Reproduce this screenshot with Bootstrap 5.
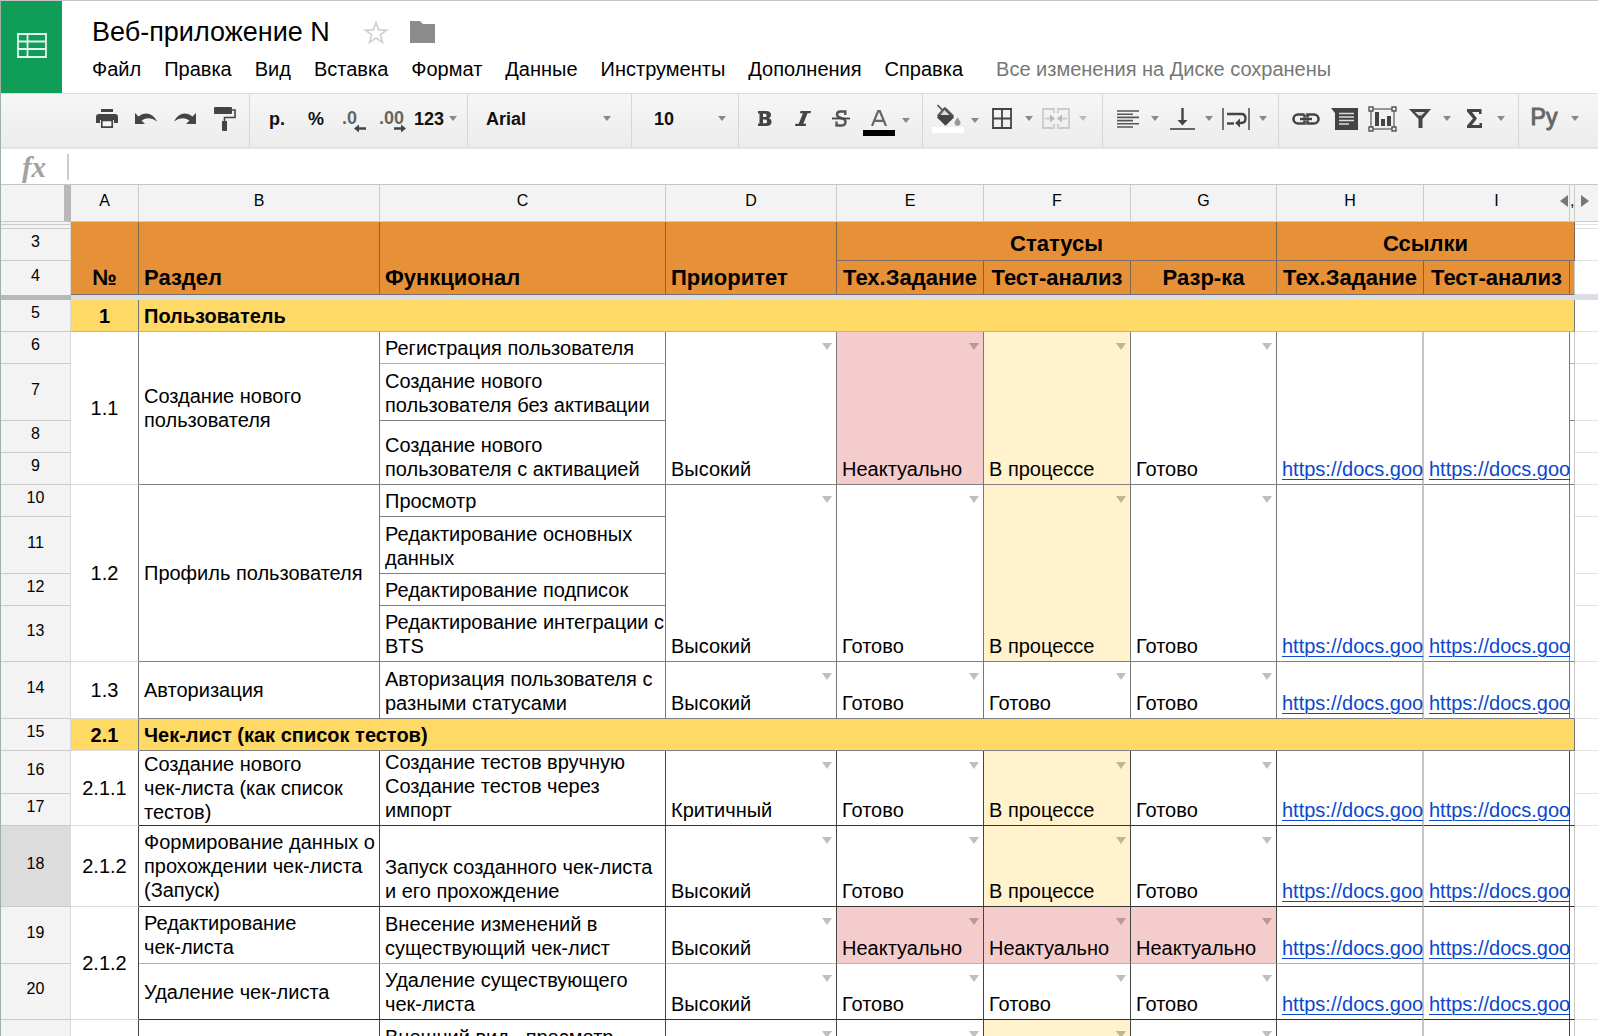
<!DOCTYPE html>
<html lang="ru">
<head>
<meta charset="utf-8">
<meta name="viewport" content="width=device-width, initial-scale=1">
<title>Веб-приложение N</title>
<link rel="stylesheet" href="https://cdn.jsdelivr.net/npm/bootstrap@5.3.0/dist/css/bootstrap.min.css">
<style>
body{font-family:"Liberation Sans",Arial,sans-serif;font-size:20px;line-height:24px;color:#000;background:#fff;border-top:1px solid #c4c4c4;border-left:1px solid #9fb0a4}
.brand{width:61px;padding-bottom:3px;background:#0f9d58}
.head-main{padding:15px 0 12px 30px}
.doc-title{font-size:27px;line-height:32px;font-weight:400}
.title-row{gap:21px}
.menu-row{gap:23px;padding-top:9px}
.menu-link{color:#000;text-decoration:none}
.saved{color:#777;margin-left:10px}
/* toolbar */
.tools{height:56px;background:linear-gradient(#f6f6f6,#ececec);border-top:1px solid #dcdcdc;border-bottom:2px solid #e4e4e4}
.tgroup{display:flex;align-items:center;flex-shrink:0;padding-left:6px;padding-bottom:4px;border-right:1px solid #d6d6d6}
.tbtn{width:38px;height:40px;padding:0;border:0;background:none;display:flex;align-items:center;justify-content:center;color:#444;flex-shrink:0}
.tcar{width:16px;height:40px;padding:0;border:0;background:none;display:flex;align-items:center;justify-content:center;color:#888;flex-shrink:0}
.ttext{font-size:18px;font-weight:700;color:#111}
.tlang{font-size:23px;color:#666;-webkit-text-stroke:1px #666;padding-bottom:4px}
.tsel{appearance:none;border:0;background:none;padding:0;outline:0;color:#111;font-size:18px;font-weight:700;min-width:0}
.g-file{width:249px;padding-left:87px;gap:1px}.g-num{width:218px;padding-left:8px;gap:1px}.g-font{width:164px;padding-left:18px}
.g-size{width:107px;padding-left:22px}.g-text{width:184px;padding-left:7px}.g-cell{width:180px}.g-align{width:176px}.g-ins{width:240px;padding-left:8px}
.swatch{width:32px;height:6px}
/* formula bar */
.fbar{height:36px;border-bottom:1px solid #c6c6c6}
.fx{width:66px;font:italic 700 29px/30px "Liberation Serif",serif;color:#a2a2a2;text-align:center}
.finput{border:0;border-left:2px solid #ccc;height:26px;outline:0;border-radius:0}
/* sheet */
.sheet{table-layout:fixed;width:100%;border-collapse:separate;border-spacing:0;--v:#777;--h:#808080;--g:#e2e2e2}
.sheet th,.sheet td{padding:0 2px 3px 5px;vertical-align:bottom;border-right:1px solid var(--v);border-bottom:1px solid var(--h);position:relative;font-weight:400}
.sheet .hd,.sheet .rn{background:#f3f3f3;font-size:16px;line-height:18px;text-align:center;vertical-align:middle;padding:0 0 5px;border-color:#cbcbcb}
.sheet .rn{border-right-color:#d9d9d9}
.sheet .corner{border-right:7px solid #b8b8b8}
.sheet .on{background:#dcdcdc}
.sheet .thin{font-size:1px;line-height:1px;padding:0}
.sheet .og{background:#e69138;font-weight:700;font-size:22px;padding-bottom:4px;border-right-color:#7d6650;border-bottom-color:#7d7068}
.sheet .ctr{text-align:center;padding-left:0;padding-right:0}
.sheet .sec{background:#ffd966;font-weight:700}
.sheet .lft{vertical-align:middle;padding-bottom:0}
.sheet .num{text-align:center;vertical-align:middle;padding:0;border-bottom-color:#dcdcdc}
.sheet .sl{padding:0;border-right-color:#c8c8c8}
.sheet .pl{padding:0;border-right:0;border-bottom-color:var(--g)}
.sheet .hc{border-right:2px solid #c6c6c6}
.sheet .hc,.sheet .ic{padding-right:0}
.sheet .soft{border-bottom-color:#b4b4b4}
.sheet .frz td{padding:0;background:#d9dde6;border:0;font-size:1px;line-height:1px}
.sheet .frz td:first-child{background:#b8b8b8}
.sheet .bad{background:#f4cccc}.sheet .wip{background:#fff2cc}
.dark{--v:#444;--h:#333}
.pick{position:absolute;top:11px;right:4px;width:10px;height:7px;padding:0;border:0;background:rgba(0,0,0,.25);clip-path:polygon(0 0,100% 0,50% 100%)}
.lnk{display:block;white-space:nowrap;color:#0b48cb;text-decoration:underline;text-decoration-thickness:1px;text-underline-offset:3px}
.spill{height:68px;display:flex;flex-direction:column;justify-content:flex-end}
.arr{position:absolute;top:10px;width:8px;height:12px;padding:0;border:0;background:#777}
.arr-l{right:1px;clip-path:polygon(100% 0,100% 100%,0 50%)}
.arr-r{left:6px;clip-path:polygon(0 0,100% 50%,0 100%)}
.r32{height:32px}.r34{height:34px}.r56{height:56px}.r57{height:57px}.r43{height:43px}.r81{height:81px}
</style>
<script src="https://cdn.jsdelivr.net/npm/bootstrap@5.3.0/dist/js/bootstrap.bundle.min.js"></script>
</head>
<body class="vh-100 d-flex flex-column overflow-hidden">
<svg width="0" height="0" class="position-absolute" aria-hidden="true"><symbol id="car" viewBox="0 0 8 5"><path d="M0 0h8L4 5z" fill="currentColor"/></symbol></svg>

<header class="d-flex flex-shrink-0">
  <a href="#" class="brand d-flex align-items-center justify-content-center" aria-label="Таблицы">
    <svg width="30" height="25" viewBox="0 0 30 25" fill="none" stroke="#e4f5ec" stroke-width="1.8"><path d="M1 1h28v23H1zM1 8.500h28M1 16h28M10.500 1v23"/></svg>
  </a>
  <div class="head-main flex-fill">
    <div class="title-row d-flex align-items-center">
      <h1 class="doc-title m-0">Веб-приложение N</h1>
      <button class="btn p-0 border-0 ms-2 d-flex" aria-label="Пометить"><svg class="ms-1" width="26" height="25" viewBox="0 0 26 25"><path d="M13 2.500l2.700 7.300 7.800.3-6.100 4.800 2.100 7.500-6.500-4.300-6.500 4.300 2.100-7.500-6.100-4.800 7.800-.3z" fill="none" stroke="#d2d2d2" stroke-width="1.800"/></svg></button>
      <button class="btn p-0 border-0 d-flex" aria-label="Переместить"><svg width="25" height="22" viewBox="0 0 25 22"><path d="M0 0h10l3 3h12v19H0z" fill="#8c8c8c"/></svg></button>
    </div>
    <nav class="menu-row d-flex align-items-center text-nowrap">
      <a href="#" class="menu-link">Файл</a><a href="#" class="menu-link">Правка</a><a href="#" class="menu-link">Вид</a><a href="#" class="menu-link">Вставка</a><a href="#" class="menu-link">Формат</a><a href="#" class="menu-link">Данные</a><a href="#" class="menu-link">Инструменты</a><a href="#" class="menu-link">Дополнения</a><a href="#" class="menu-link">Справка</a><span class="saved">Все изменения на Диске сохранены</span>
    </nav>
  </div>
</header>

<div class="tools d-flex flex-shrink-0 overflow-hidden" role="toolbar">
  <div class="tgroup g-file">
    <button class="tbtn" aria-label="Печать"><svg width="22" height="20" viewBox="0 0 22 20"><path d="M5 0h12v3H5zM3 5h16a3 3 0 0 1 3 3v6h-4v-3H4v3H0V8a3 3 0 0 1 3-3z" fill="#444"/><path d="M5.800 11.500h10.400v6.700H5.800z" fill="#f6f6f6" stroke="#444" stroke-width="1.700"/></svg></button>
    <button class="tbtn" aria-label="Отменить"><svg width="24" height="14" viewBox="0 0 24 14"><path d="M1 1v11h10L7.500 8.500Q15 3.500 23 9.500 19 1.500 12 1.500 8 1.500 4.500 4.500z" fill="#444"/></svg></button>
    <button class="tbtn" aria-label="Повторить"><svg width="24" height="14" viewBox="0 0 24 14"><path d="M23 1v11H13l3.500-3.500Q9 3.500 1 9.500 5 1.500 12 1.500q4 0 7.500 3z" fill="#444"/></svg></button>
    <button class="tbtn" aria-label="Копировать форматирование"><svg width="23" height="26" viewBox="0 0 23 26"><path d="M1 2q0-1 1-1h16q1 0 1 1v5q0 1-1 1H2q-1 0-1-1zM9 15h5v9q0 1-1 1h-3q-1 0-1-1z" fill="#444"/><path d="M19 4h3v7.500H11.500V16" fill="none" stroke="#444" stroke-width="1.600"/></svg></button>
  </div>
  <div class="tgroup g-num">
    <button class="tbtn ttext">р.</button><button class="tbtn ttext">%</button>
    <button class="tbtn" aria-label="Уменьшить число знаков"><svg width="26" height="26" viewBox="0 0 26 26"><text x="0" y="18" font-size="18" font-weight="700" fill="#666">.0</text><path d="M24 22.500H14" stroke="#444" stroke-width="2.500"/><path d="M17 18.500v8l-5-4z" fill="#444"/></svg></button>
    <button class="tbtn" aria-label="Увеличить число знаков"><svg width="30" height="26" viewBox="0 0 30 26"><text x="0" y="18" font-size="18" font-weight="700" fill="#666">.00</text><path d="M15 22.500h9" stroke="#444" stroke-width="2.500"/><path d="M22 18.500v8l5-4z" fill="#444"/></svg></button>
    <button class="tbtn ttext w-auto" aria-label="Другие форматы">123</button><button class="tcar" aria-label="Форматы"><svg width="8" height="5"><use href="#car"/></svg></button>
  </div>
  <div class="tgroup g-font"><select class="tsel flex-fill" aria-label="Шрифт"><option>Arial</option></select><span class="tcar me-3"><svg width="8" height="5"><use href="#car"/></svg></span></div>
  <div class="tgroup g-size"><select class="tsel flex-fill" aria-label="Размер шрифта"><option>10</option></select><span class="tcar me-2"><svg width="8" height="5"><use href="#car"/></svg></span></div>
  <div class="tgroup g-text">
    <button class="tbtn" aria-label="Полужирный"><svg width="14" height="15" viewBox="0 0 14 15"><path d="M0 0h8q5 0 5 4 0 2.400-2.300 3.200Q13.500 8 13.500 10.700 13.500 15 8 15H0v-2.500h1.500v-10H0zM5 2.700v3.400h2q1.700 0 1.700-1.700T7 2.700zM5 8.600v3.700h2.200q1.900 0 1.900-1.900T7.200 8.600z" fill="#444" fill-rule="evenodd"/></svg></button>
    <button class="tbtn" aria-label="Курсив"><svg width="16" height="15" viewBox="0 0 16 15"><path d="M5.500 0H16l-.5 2.300h-3L8.300 12.700h2.900l-.5 2.300H0l.5-2.300h3.200L7.900 2.300H5z" fill="#444"/></svg></button>
    <button class="tbtn" aria-label="Зачёркнутый"><svg width="18" height="17" viewBox="0 0 18 17"><path d="M13.300 5V1.500H8.500Q5 1.500 5 4.500 5 7 9 8q4.500 1 4.500 4 0 3.500-4.500 3.500H4.500V11.500" fill="none" stroke="#555" stroke-width="2.400"/><path d="M0 8.500h18" stroke="#444" stroke-width="1.800"/></svg></button>
    <button class="tbtn flex-column" aria-label="Цвет текста"><svg class="mt-2 mb-1" width="16" height="16" viewBox="0 0 16 16"><path d="M1 16L7.200 1h1.600L15 16M3.500 10.800h9" fill="none" stroke="#666" stroke-width="2.200"/></svg><span class="swatch bg-black"></span></button>
    <button class="tcar pt-1" aria-label="Цвета"><svg width="8" height="5"><use href="#car"/></svg></button>
  </div>
  <div class="tgroup g-cell">
    <button class="tbtn flex-column" aria-label="Цвет заливки"><svg width="26" height="23" viewBox="0 0 26 23"><path d="M10 4.500l9 9-8.500 8.300L2 13.500z" fill="#444"/><path d="M2.500 1l9 9.500M10 3.500L2.500 12M10 4l8.500 8.500" fill="none" stroke="#555" stroke-width="1.800"/><path d="M9.500 6l5 5h-9z" fill="#ddd"/><path d="M22.500 13.500q3 3.800 3 5.300a3 3 0 0 1-6 0q0-1.500 3-5.300z" fill="#999"/></svg><span class="swatch bg-white"></span></button>
    <button class="tcar pt-1" aria-label="Заливка"><svg width="8" height="5"><use href="#car"/></svg></button>
    <button class="tbtn" aria-label="Границы"><svg width="20" height="21" viewBox="0 0 20 21"><path d="M1 1h18v19H1zM10 1v19M1 10.500h18" fill="none" stroke="#444" stroke-width="1.800"/></svg></button>
    <button class="tcar" aria-label="Виды границ"><svg width="8" height="5"><use href="#car"/></svg></button>
    <button class="tbtn" aria-label="Объединить ячейки"><svg width="28" height="21" viewBox="0 0 28 21"><path d="M12 5V1H1v19h11v-4M16 5V1h11v19H16v-4M3 10.500h8M25 10.500h-8" fill="none" stroke="#ccc" stroke-width="1.800"/><path d="M8 6.500l5 4-5 4zM20 6.500l-5 4 5 4z" fill="#bbb"/></svg></button>
    <button class="tcar opacity-50" aria-label="Виды объединения"><svg width="8" height="5"><use href="#car"/></svg></button>
  </div>
  <div class="tgroup g-align">
    <button class="tbtn" aria-label="Выравнивание"><svg width="22" height="18" viewBox="0 0 22 18"><path d="M0 1h22M0 4.200h16M0 7.400h22M0 10.600h16M0 13.800h22M0 17h16" stroke="#555" stroke-width="1.600"/></svg></button>
    <button class="tcar" aria-label="По горизонтали"><svg width="8" height="5"><use href="#car"/></svg></button>
    <button class="tbtn" aria-label="Вертикальное выравнивание"><svg width="25" height="22" viewBox="0 0 25 22"><path d="M12.500 0v13" stroke="#444" stroke-width="2.400"/><path d="M7.500 12h10l-5 5.500z" fill="#444"/><path d="M0 21h25" stroke="#555" stroke-width="1.800"/></svg></button>
    <button class="tcar" aria-label="По вертикали"><svg width="8" height="5"><use href="#car"/></svg></button>
    <button class="tbtn" aria-label="Перенос текста"><svg width="28" height="22" viewBox="0 0 28 22"><path d="M1 0v22M27 0v22" stroke="#555" stroke-width="1.600"/><path d="M5 6h14.500q4 0 4 4.500T19 15h-2" fill="none" stroke="#444" stroke-width="2.400"/><path d="M5 15.500h7" stroke="#444" stroke-width="2.400"/><path d="M18 10.500v9l-5-4.500z" fill="#444"/></svg></button>
    <button class="tcar" aria-label="Виды переноса"><svg width="8" height="5"><use href="#car"/></svg></button>
  </div>
  <div class="tgroup g-ins">
    <button class="tbtn" aria-label="Ссылка"><svg width="28" height="12" viewBox="0 0 28 12"><path d="M12.500 1.500H6a4.500 4.500 0 0 0 0 9h6.500V7.500M15.500 4.500v-3H22a4.500 4.500 0 0 1 0 9h-6.500V7.500M12.500 4.500v-3M8 6h12" fill="none" stroke="#444" stroke-width="2.600"/></svg></button>
    <button class="tbtn" aria-label="Комментарий"><svg width="27" height="22" viewBox="0 0 27 22"><path d="M0 0h27v22H4V5z" fill="#444"/><path d="M8 5.500h15M8 9h15M8 12.500h15M8 16h10" stroke="#ddd" stroke-width="1.500"/></svg></button>
    <button class="tbtn" aria-label="Диаграмма"><svg width="29" height="26" viewBox="0 0 29 26"><path d="M3 3h23v20H3z" fill="none" stroke="#777" stroke-width="1.500"/><path d="M1 1h4v4H1zM24 1h4v4h-4zM1 21h4v4H1zM24 21h4v4h-4z" fill="#eee" stroke="#555" stroke-width="1.400"/><path d="M7 6h4v14H7zM13 13h4v7h-4zM19 10h4v10h-4z" fill="#444"/></svg></button>
    <button class="tbtn" aria-label="Фильтр"><svg width="22" height="19" viewBox="0 0 22 19"><path d="M0 0h22l-8.500 10v9h-4v-9z" fill="#444"/><path d="M6 3h10l-3.500 3.500h-3z" fill="#ddd"/></svg></button>
    <button class="tcar" aria-label="Фильтры"><svg width="8" height="5"><use href="#car"/></svg></button>
    <button class="tbtn" aria-label="Функции"><svg width="15" height="19" viewBox="0 0 15 19"><path d="M0 0h14.500v5H12V3H5l5 6.500L5 16h7.500v-2H15v5H0v-2.500l6-7-6-7z" fill="#444"/></svg></button>
    <button class="tcar" aria-label="Список функций"><svg width="8" height="5"><use href="#car"/></svg></button>
  </div>
  <div class="tgroup border-0">
    <button class="tbtn tlang" aria-label="Способ ввода">Ру</button>
    <button class="tcar ms-1" aria-label="Языки"><svg width="8" height="5"><use href="#car"/></svg></button>
  </div>
</div>

<div class="fbar d-flex align-items-center flex-shrink-0">
  <label class="fx" for="formula">fx</label>
  <input id="formula" class="finput flex-fill" type="text">
</div>

<main class="flex-fill overflow-hidden">
<table class="sheet">
<colgroup><col style="width:70px"><col style="width:68px"><col style="width:241px"><col style="width:286px"><col style="width:171px"><col style="width:147px"><col style="width:147px"><col style="width:146px"><col style="width:147px"><col style="width:146px"><col style="width:5px"><col></colgroup>
<thead>
<tr style="height:37px"><th class="hd corner"></th><th class="hd">A</th><th class="hd">B</th><th class="hd">C</th><th class="hd">D</th><th class="hd">E</th><th class="hd">F</th><th class="hd">G</th><th class="hd">H</th><th class="hd">I<button class="arr arr-l" aria-label="Показать столбцы слева"></button></th><th class="hd">,</th><th class="hd border-end-0"><button class="arr arr-r" aria-label="Показать столбцы справа"></button></th></tr>
</thead>
<tbody>
<tr style="height:3px"><th class="rn thin"></th><td class="og ctr" rowspan="4">№</td><td class="og" rowspan="4">Раздел</td><td class="og" rowspan="4">Функционал</td><td class="og" rowspan="4">Приоритет</td><td class="og ctr" colspan="3" rowspan="3">Статусы</td><td class="og ctr" colspan="3" rowspan="3">Ссылки</td><td class="pl thin"></td></tr>
<tr style="height:4px"><th class="rn thin"></th><td class="pl thin"></td></tr>
<tr class="r32"><th class="rn">3</th><td class="pl"></td></tr>
<tr class="r34"><th class="rn border-bottom-0">4</th><td class="og ctr">Тех.Задание</td><td class="og ctr">Тест-анализ</td><td class="og ctr">Разр-ка</td><td class="og ctr">Тех.Задание</td><td class="og ctr">Тест-анализ</td><td class="og sl"></td><td class="pl"></td></tr>
<tr class="frz" style="height:5px"><td></td><td colspan="11"></td></tr>
<tr class="r32"><th class="rn">5</th><td class="num sec soft">1</td><td class="sec soft" colspan="9">Пользователь</td><td class="pl"></td></tr>

<tr class="r32"><th class="rn">6</th><td class="num" rowspan="4">1.1</td><td class="lft" rowspan="4">Создание нового пользователя</td><td class="soft">Регистрация пользователя</td><td rowspan="4">Высокий<button class="pick" aria-label="Выбрать"></button></td><td class="bad" rowspan="4">Неактуально<button class="pick" aria-label="Выбрать"></button></td><td class="wip" rowspan="4">В процессе<button class="pick" aria-label="Выбрать"></button></td><td rowspan="4">Готово<button class="pick" aria-label="Выбрать"></button></td><td class="hc" rowspan="4"><a href="#" class="lnk">https://docs.goo</a></td><td class="ic" rowspan="4"><a href="#" class="lnk">https://docs.goo</a></td><td class="sl soft"></td><td class="pl"></td></tr>
<tr class="r57"><th class="rn">7</th><td>Создание нового пользователя без активации</td><td class="sl"></td><td class="pl"></td></tr>
<tr class="r32"><th class="rn">8</th><td rowspan="2">Создание нового пользователя с активацией</td><td class="sl" rowspan="2"></td><td class="pl"></td></tr>
<tr class="r32"><th class="rn">9</th><td class="pl"></td></tr>

<tr class="r32"><th class="rn">10</th><td class="num" rowspan="4">1.2</td><td class="lft" rowspan="4">Профиль пользователя</td><td>Просмотр</td><td rowspan="4">Высокий<button class="pick" aria-label="Выбрать"></button></td><td rowspan="4">Готово<button class="pick" aria-label="Выбрать"></button></td><td class="wip" rowspan="4">В процессе<button class="pick" aria-label="Выбрать"></button></td><td rowspan="4">Готово<button class="pick" aria-label="Выбрать"></button></td><td class="hc" rowspan="4"><a href="#" class="lnk">https://docs.goo</a></td><td class="ic" rowspan="4"><a href="#" class="lnk">https://docs.goo</a></td><td class="sl" rowspan="4"></td><td class="pl"></td></tr>
<tr class="r57"><th class="rn">11</th><td>Редактирование основных данных</td><td class="pl"></td></tr>
<tr class="r32"><th class="rn">12</th><td>Редактирование подписок</td><td class="pl"></td></tr>
<tr class="r56"><th class="rn">13</th><td class="text-nowrap pe-0">Редактирование интеграции с<br>BTS</td><td class="pl"></td></tr>

<tr class="r57"><th class="rn">14</th><td class="num">1.3</td><td class="lft">Авторизация</td><td>Авторизация пользователя с разными статусами</td><td>Высокий<button class="pick" aria-label="Выбрать"></button></td><td>Готово<button class="pick" aria-label="Выбрать"></button></td><td>Готово<button class="pick" aria-label="Выбрать"></button></td><td>Готово<button class="pick" aria-label="Выбрать"></button></td><td class="hc"><a href="#" class="lnk">https://docs.goo</a></td><td class="ic"><a href="#" class="lnk">https://docs.goo</a></td><td class="sl"></td><td class="pl"></td></tr>
<tr class="r32"><th class="rn">15</th><td class="num sec">2.1</td><td class="sec" colspan="9">Чек-лист (как список тестов)</td><td class="pl"></td></tr>

<tr class="r43 dark"><th class="rn">16</th><td class="num" rowspan="2">2.1.1</td><td class="lft" rowspan="2">Создание нового<br>чек-листа (как список<br>тестов)</td><td rowspan="2"><div class="spill"><span>Создание тестов вручную</span><span>Создание тестов через<br>импорт</span></div></td><td rowspan="2">Критичный<button class="pick" aria-label="Выбрать"></button></td><td rowspan="2">Готово<button class="pick" aria-label="Выбрать"></button></td><td class="wip" rowspan="2">В процессе<button class="pick" aria-label="Выбрать"></button></td><td rowspan="2">Готово<button class="pick" aria-label="Выбрать"></button></td><td class="hc" rowspan="2"><a href="#" class="lnk">https://docs.goo</a></td><td class="ic" rowspan="2"><a href="#" class="lnk">https://docs.goo</a></td><td class="sl" rowspan="2"></td><td class="pl"></td></tr>
<tr class="r32 dark"><th class="rn">17</th><td class="pl"></td></tr>

<tr class="r81 dark"><th class="rn on">18</th><td class="num">2.1.2</td><td class="lft">Формирование данных о<br>прохождении чек-листа<br>(Запуск)</td><td>Запуск созданного чек-листа<br>и его прохождение</td><td>Высокий<button class="pick" aria-label="Выбрать"></button></td><td>Готово<button class="pick" aria-label="Выбрать"></button></td><td class="wip">В процессе<button class="pick" aria-label="Выбрать"></button></td><td>Готово<button class="pick" aria-label="Выбрать"></button></td><td class="hc"><a href="#" class="lnk">https://docs.goo</a></td><td class="ic"><a href="#" class="lnk">https://docs.goo</a></td><td class="sl"></td><td class="pl"></td></tr>

<tr class="r57 dark"><th class="rn">19</th><td class="num" rowspan="2">2.1.2</td><td class="lft soft">Редактирование<br>чек-листа</td><td class="soft">Внесение изменений в существующий чек-лист</td><td class="soft">Высокий<button class="pick" aria-label="Выбрать"></button></td><td class="bad soft">Неактуально<button class="pick" aria-label="Выбрать"></button></td><td class="bad soft">Неактуально<button class="pick" aria-label="Выбрать"></button></td><td class="bad soft">Неактуально<button class="pick" aria-label="Выбрать"></button></td><td class="hc soft"><a href="#" class="lnk">https://docs.goo</a></td><td class="ic soft"><a href="#" class="lnk">https://docs.goo</a></td><td class="sl soft"></td><td class="pl"></td></tr>
<tr class="r56 dark"><th class="rn">20</th><td class="lft">Удаление чек-листа</td><td>Удаление существующего<br>чек-листа</td><td>Высокий<button class="pick" aria-label="Выбрать"></button></td><td>Готово<button class="pick" aria-label="Выбрать"></button></td><td>Готово<button class="pick" aria-label="Выбрать"></button></td><td>Готово<button class="pick" aria-label="Выбрать"></button></td><td class="hc"><a href="#" class="lnk">https://docs.goo</a></td><td class="ic"><a href="#" class="lnk">https://docs.goo</a></td><td class="sl"></td><td class="pl"></td></tr>
<tr class="r57 dark"><th class="rn"></th><td class="num"></td><td></td><td>Внешний вид , просмотр<br>&nbsp;</td><td><button class="pick" aria-label="Выбрать"></button></td><td><button class="pick" aria-label="Выбрать"></button></td><td class="wip"><button class="pick" aria-label="Выбрать"></button></td><td><button class="pick" aria-label="Выбрать"></button></td><td class="hc"></td><td></td><td class="sl"></td><td class="pl"></td></tr>
</tbody>
</table>
</main>
</body>
</html>
